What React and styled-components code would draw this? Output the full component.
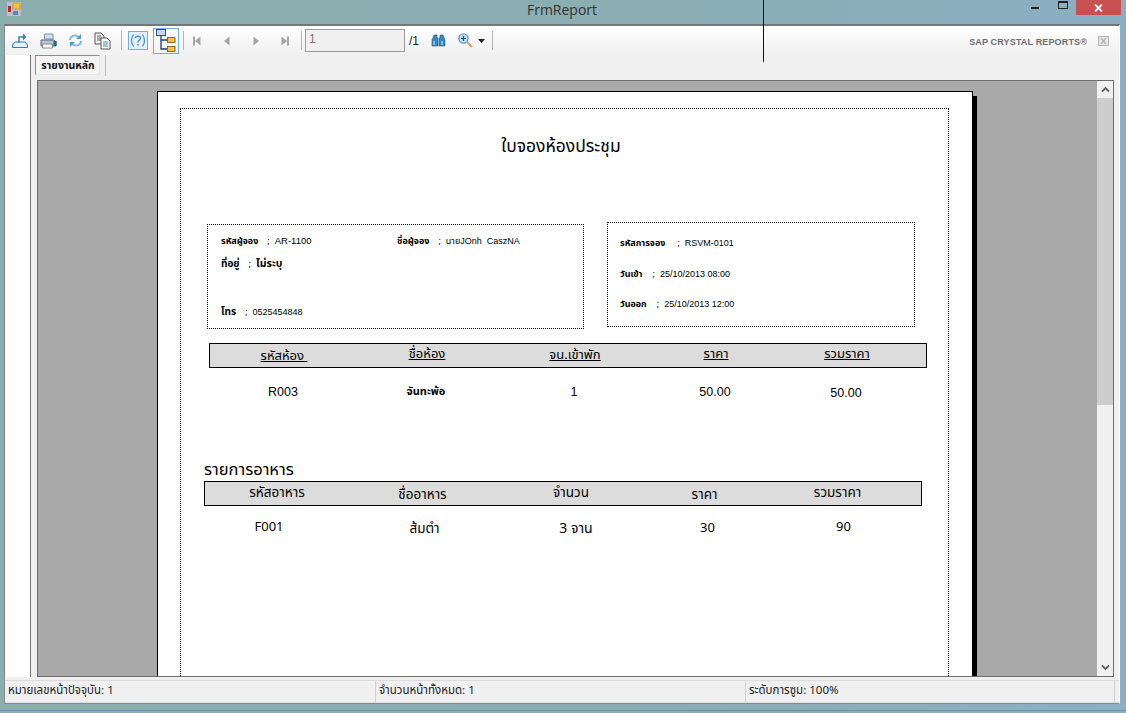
import React from 'react';
import styled, { createGlobalStyle } from 'styled-components';

const thaiSans = `"Tahoma", "Noto Sans Thai", "Noto Sans", "Liberation Sans", sans-serif`;

const GlobalStyle = createGlobalStyle`
  html, body {
    margin: 0;
    padding: 0;
    overflow: hidden;
    background: #8aaeb8;
  }
`;

const Desktop = styled.div`
  position: relative;
  width: 1126px;
  height: 713px;
  display: flex;
  flex-direction: column;
  overflow: hidden;
  background: linear-gradient(90deg, #8aaeae 0%, #8aaeb2 55%, #8aafc3 100%);
  font-family: "Liberation Sans", sans-serif;
`;

const TitleBar = styled.div`
  position: relative;
  height: 24px;
  flex: none;
  display: flex;
  align-items: flex-start;
  justify-content: space-between;
`;

const AppIcon = styled.svg`
  width: 14px;
  height: 14px;
  margin: 2px 0 0 7px;
`;

const TitleText = styled.div`
  position: absolute;
  left: 0;
  right: 2px;
  top: 1px;
  text-align: center;
  font-size: 14px;
  line-height: 18px;
  color: #333;
  font-family: "Open Sans", "Liberation Sans", sans-serif;
`;

const WindowControls = styled.div`
  display: flex;
  align-items: flex-start;
  margin-right: 5px;
`;

const MinButton = styled.div`
  width: 8px;
  height: 2px;
  margin: 7px 19px 0 0;
  background: #222;
`;

const MaxButton = styled.div`
  width: 8px;
  height: 5px;
  margin: 1px 8px 0 0;
  border: 1px solid #222;
  border-top-width: 2px;
`;

const CloseButton = styled.div`
  width: 45px;
  height: 15px;
  background: #c75050;
  display: flex;
  align-items: center;
  justify-content: center;
`;

const StrayLine = styled.div`
  position: absolute;
  left: 763px;
  top: 0;
  width: 1px;
  height: 62px;
  background: #111;
`;

const Frame = styled.div`
  margin: 0 6px 0 4px;
  height: 680px;
  flex: none;
  display: flex;
  flex-direction: column;
  background: #f0f0f0;
  border-top: 2px solid #777;
  border-left: 1px solid #888;
  border-right: 1px solid #fff;
  border-bottom: 1px solid #8a8a8a;
  box-sizing: border-box;
`;

const BottomEdge = styled.div`
  margin-top: 6px;
  height: 1px;
  background: #6d93ad;
`;

const Toolbar = styled.div`
  height: 29px;
  flex: none;
  display: flex;
  align-items: center;
  padding-left: 3px;
  background: linear-gradient(180deg, #ffffff 0%, #f0f0f0 100%);
`;

const ToolIcon = styled.button`
  width: ${(p) => p.$w || 28}px;
  height: ${(p) => p.$h || 18}px;
  margin-left: ${(p) => p.$ml || 0}px;
  padding: 0;
  flex: none;
  display: flex;
  align-items: center;
  justify-content: center;
  background: ${(p) => p.$fill || 'transparent'};
  border: ${(p) => (p.$active ? '1px solid #6aaef0' : 'none')};
  box-sizing: border-box;
`;

const ToolSep = styled.div`
  width: 1px;
  height: 19px;
  flex: none;
  background: #b4b4b4;
  margin: 0 ${(p) => p.$right ?? 4}px 0 ${(p) => p.$left ?? 4}px;
`;

const PageInput = styled.div`
  width: 100px;
  height: 23px;
  flex: none;
  box-sizing: border-box;
  border: 1px solid #9a9a9a;
  background: #f0f0f0;
  color: #777;
  font-size: 12px;
  line-height: 18px;
  padding-left: 3px;
`;

const PageTotal = styled.div`
  width: 22px;
  margin-left: 4px;
  flex: none;
  font-size: 12px;
  color: #222;
`;

const BrandText = styled.div`
  margin-left: auto;
  margin-top: 3px;
  font-size: 9px;
  font-weight: bold;
  letter-spacing: 0.15px;
  color: #6f6f6f;
  white-space: nowrap;
`;

const ToolClose = styled.svg`
  width: 11px;
  height: 10px;
  margin: 0 10px 0 11px;
`;

const Body = styled.div`
  flex: 1;
  min-height: 0;
  display: flex;
  padding-left: 1px;
`;

const SidePanel = styled.div`
  width: 24px;
  flex: none;
  background: #fff;
  border-right: 1px solid #777;
  height: 622px;
`;

const MainColumn = styled.div`
  width: 1077px;
  margin-left: 6px;
  display: flex;
  flex-direction: column;
`;

const TabRow = styled.div`
  height: 25px;
  flex: none;
  margin-left: -2px;
  display: flex;
  align-items: flex-start;
`;

const Tab = styled.div`
  width: 65px;
  height: 20px;
  box-sizing: border-box;
  border: 1px solid #8c8c8c;
  border-right-color: #e6e6e6;
  border-bottom-color: #e6e6e6;
  background: #f4f4f4;
  padding-left: 1px;
  font-family: ${thaiSans};
  font-size: 10.5px;
  font-weight: bold;
  line-height: 20px;
  text-align: center;
  color: #111;
`;

const TabSep = styled.div`
  width: 1px;
  height: 21px;
  margin-left: 5px;
  background: #bdbdbd;
`;

const Viewer = styled.div`
  height: 597px;
  flex: none;
  box-sizing: border-box;
  display: flex;
  border: 1px solid #6e6e6e;
  background: #a9a9a9;
  overflow: hidden;
`;

const Canvas = styled.div`
  flex: 1;
  min-width: 0;
  overflow: hidden;
  padding: 10px 0 0 119px;
`;

const Sheet = styled.div`
  width: 816px;
  height: 700px;
  box-sizing: border-box;
  padding: 16px 23px 0 22px;
  background: #fff;
  border: 1px solid #000;
  box-shadow: 4px 5px 0 #000;
`;

const DottedArea = styled.div`
  height: 660px;
  box-sizing: border-box;
  border: 1px dotted #000;
  padding-top: 25px;
  color: #000;
  font-family: ${thaiSans};
`;

const ReportTitle = styled.div`
  margin-right: 7px;
  padding-top: 1px;
  font-size: 17.5px;
  line-height: 24px;
  text-align: center;
`;

const InfoRow = styled.div`
  display: flex;
  align-items: flex-start;
  margin: 63px 0 0 26px;
`;

const InfoBox = styled.div`
  box-sizing: border-box;
  width: ${(p) => p.$w}px;
  height: 105px;
  margin: ${(p) => p.$top || 0}px ${(p) => p.$right || 0}px 0 0;
  border: 1px dotted #000;
  padding: ${(p) => p.$padTop || 0}px 0 0 ${(p) => p.$padLeft || 13}px;
  display: flex;
  flex-direction: column;
`;

const InfoLine = styled.div`
  display: flex;
  height: ${(p) => p.$h}px;
  font-size: 9px;
  line-height: 12px;
  white-space: nowrap;
`;

const InfoField = styled.div`
  width: ${(p) => (p.$w ? `${p.$w}px` : 'auto')};
  flex: none;
`;

const InfoLabel = styled.span`
  font-weight: bold;
  font-size: ${(p) => p.$size || 9}px;
`;

const Semi = styled.span`
  margin: 0 ${(p) => p.$right || 5}px 0 ${(p) => p.$left || 9}px;
`;

const InfoValue = styled.span`
  font-size: ${(p) => p.$size || 9}px;
  font-family: "Liberation Sans", ${thaiSans};
`;

const TableBar = styled.div`
  display: grid;
  grid-template-columns: ${(p) => p.$cols};
  width: 718px;
  height: 25px;
  box-sizing: border-box;
  margin-left: ${(p) => p.$left}px;
  margin-top: ${(p) => p.$top || 0}px;
  background: #dcdcdc;
  border: 1px solid #000;
`;

const HeaderCell = styled.div`
  text-align: center;
  font-size: ${(p) => p.$size || 13}px;
  line-height: 18px;
  padding-top: ${(p) => p.$drop || 0}px;
  white-space: nowrap;
  text-decoration: ${(p) => (p.$underline ? 'underline' : 'none')};
`;

const DataRow = styled.div`
  display: grid;
  grid-template-columns: ${(p) => p.$cols};
  width: 718px;
  margin-left: ${(p) => p.$left}px;
  padding-top: ${(p) => p.$top}px;
  height: ${(p) => p.$h}px;
`;

const DataCell = styled.div`
  text-align: center;
  font-size: ${(p) => p.$size || 13}px;
  font-weight: ${(p) => (p.$bold ? 'bold' : 'normal')};
  font-family: ${(p) => (p.$arial ? '"Liberation Sans", sans-serif' : 'inherit')};
  line-height: 18px;
  padding-top: ${(p) => p.$drop || 0}px;
  white-space: nowrap;
`;

const SectionTitle = styled.div`
  margin-left: 23px;
  font-size: 16.5px;
  line-height: 20px;
`;

const ScrollBar = styled.div`
  width: 16px;
  flex: none;
  background: #f0f0f0;
  display: flex;
  flex-direction: column;
`;

const ScrollButton = styled.div`
  height: 17px;
  flex: none;
  display: flex;
  align-items: center;
  justify-content: center;
`;

const ScrollThumb = styled.div`
  height: 307px;
  flex: none;
  background: #cdcdcd;
`;

const ScrollTrack = styled.div`
  flex: 1;
`;

const StatusBar = styled.div`
  height: 21px;
  flex: none;
  margin-top: 5px;
  display: grid;
  grid-template-columns: 371px 370px 369px;
  border-top: 1px solid #dcdcdc;
  border-bottom: 1px solid #dcdcdc;
  background: #f0f0f0;
  font-family: ${thaiSans};
  font-size: 11.5px;
  line-height: 20px;
  color: #222;
`;

const StatusCell = styled.div`
  padding-left: 3px;
  border-right: 1px solid #d0d0d0;
  white-space: nowrap;
`;

const ExportIcon = () => (
  <svg width="18" height="17" viewBox="0 0 18 17">
    <path d="M1.5 13 L4 10 H14 L16.5 13 V15.5 H1.5 Z" fill="#e4f0f8" stroke="#2f7fb5" />
    <path d="M8 11 V5 H12" fill="none" stroke="#2f7fb5" strokeWidth="1.4" />
    <path d="M12 1.5 L15.5 5 L12 8.5 Z" fill="#2f7fb5" />
  </svg>
);

const PrintIcon = () => (
  <svg width="17" height="16" viewBox="0 0 17 16">
    <path d="M4.5 1 H13 V6 H4.5 Z" fill="#cfe2f2" stroke="#7c93a8" />
    <path d="M1 7 H14 L16 9 V13 H1 Z" fill="#b9c4cf" stroke="#5c6c7c" />
    <path d="M2.5 11 H12.5 V15 H2.5 Z" fill="#fff" stroke="#7c8c9c" />
    <path d="M13.5 8 h3 v5 h-3 z" fill="#1e6a88" />
  </svg>
);

const RefreshIcon = () => (
  <svg width="15" height="15" viewBox="0 0 15 15" fill="none">
    <path d="M2 7 C2 3 7 1 11 4" stroke="#7dbbe0" strokeWidth="2" />
    <path d="M13 1 V6 H8 Z" fill="#4f9ccc" />
    <path d="M13 8 C13 12 8 14 4 11" stroke="#7dbbe0" strokeWidth="2" />
    <path d="M2 14 V9 H7 Z" fill="#4f9ccc" />
  </svg>
);

const CopyIcon = () => (
  <svg width="18" height="18" viewBox="0 0 18 18">
    <path d="M1 1 H7 L10 4 V12 H1 Z" fill="#f2f2f2" stroke="#555" />
    <path d="M3 4 H7 M3 6 H8 M3 8 H8" stroke="#666" />
    <path d="M7 6 H13 L16 9 V17 H7 Z" fill="#fff" stroke="#555" />
    <path d="M9 10 H14 M9 12 H14 M9 14 H14" stroke="#3d8cc4" />
  </svg>
);

const HelpIcon = () => (
  <svg width="16" height="15" viewBox="0 0 16 15" fill="none" stroke="#4a8fd0" strokeWidth="1.2">
    <path d="M3.5 1.5 C0.8 5 0.8 10 3.5 13.5" />
    <path d="M12.5 1.5 C15.2 5 15.2 10 12.5 13.5" />
    <path d="M5.5 5 C5.5 2.5 10.5 2.5 10.5 5 C10.5 7 8 7 8 9.5" strokeWidth="1.5" />
    <path d="M8 11 V12.6" strokeWidth="1.6" />
  </svg>
);

const TreeIcon = () => (
  <svg width="24" height="23" viewBox="0 0 24 23">
    <rect x="2.5" y="0.5" width="9" height="6" fill="#c9d6e8" stroke="#30507c" />
    <path d="M7 7 V20 H13 M7 11 H13" fill="none" stroke="#1d3c6c" strokeWidth="1.3" />
    <rect x="13.5" y="8.5" width="7.5" height="5" fill="#f5c04a" stroke="#8a6d22" />
    <rect x="13.5" y="17.5" width="7.5" height="5" fill="#f5c04a" stroke="#8a6d22" />
  </svg>
);

const NavIcon = ({ dir, bar }) => (
  <svg width="9" height="10" viewBox="0 0 9 10">
    {dir === 'left' ? <path d="M7.5 0.5 V9.5 L2 5 Z" fill="#a5a5a5" /> : <path d="M1.5 0.5 V9.5 L7 5 Z" fill="#a5a5a5" />}
    {bar && <rect x={dir === 'left' ? 0 : 7} y="0.5" width="2" height="9" fill="#a5a5a5" />}
  </svg>
);

const BinocularsIcon = () => (
  <svg width="15" height="13" viewBox="0 0 15 13">
    <path d="M3 1 H6 V4 H7 V12 H1 V6 Z" fill="#3b86bc" stroke="#1f5f90" strokeWidth="0.6" />
    <path d="M12 1 H9 V4 H8 V12 H14 V6 Z" fill="#3b86bc" stroke="#1f5f90" strokeWidth="0.6" />
    <path d="M3 7 V11 M11 7 V11" stroke="#cfe6f6" />
  </svg>
);

const ZoomIcon = () => (
  <svg width="15" height="16" viewBox="0 0 15 16">
    <circle cx="5.5" cy="5.5" r="4.6" fill="#bfe0f4" stroke="#4fa0d4" strokeWidth="1.3" />
    <path d="M3 5.5 H8 M5.5 3 V8" stroke="#1f4f7c" strokeWidth="1.2" />
    <path d="M9 9 L14 14" stroke="#e0a050" strokeWidth="2" />
  </svg>
);

const Caret = () => (
  <svg width="7" height="4" viewBox="0 0 7 4">
    <path d="M0 0 H7 L3.5 4 Z" fill="#222" />
  </svg>
);

const Chevron = ({ up }) => (
  <svg width="9" height="7" viewBox="0 0 9 7" fill="none">
    <path d={up ? 'M1 5.5 L4.5 2 L8 5.5' : 'M1 1.5 L4.5 5 L8 1.5'} stroke="#606060" strokeWidth="1.8" />
  </svg>
);

const roomCols = '148px 138px 158px 124px 138px';
const foodHeadCols = '144px 147px 150px 117px 149px';
const foodDataCols = '130px 181px 122px 141px 131px';

export default function App() {
  return (
    <>
      <GlobalStyle />
      <Desktop>
        <TitleBar>
          <AppIcon viewBox="0 0 14 14">
            <rect x="0" y="0" width="14" height="14" fill="#c0c0c0" />
            <rect x="6" y="1" width="7" height="6" fill="#f5c430" stroke="#b08a20" strokeWidth="0.6" />
            <rect x="1" y="4" width="3" height="6" fill="#c0282c" />
            <rect x="6" y="9" width="5" height="4" fill="#4f86d0" />
          </AppIcon>
          <TitleText>FrmReport</TitleText>
          <WindowControls>
            <MinButton />
            <MaxButton />
            <CloseButton>
              <svg width="9" height="8" viewBox="0 0 9 8">
                <path d="M1 0.5 L8 7.5 M8 0.5 L1 7.5" stroke="#fff" strokeWidth="1.8" />
              </svg>
            </CloseButton>
          </WindowControls>
        </TitleBar>

        <Frame>
          <Toolbar>
            <ToolIcon $w={24}><ExportIcon /></ToolIcon>
            <ToolIcon $w={32}><PrintIcon /></ToolIcon>
            <ToolIcon $w={22}><RefreshIcon /></ToolIcon>
            <ToolIcon $w={34}><CopyIcon /></ToolIcon>
            <ToolSep $left={1} $right={6} />
            <ToolIcon $w={20} $h={19} $active $fill="#e3f1fc"><HelpIcon /></ToolIcon>
            <ToolIcon $w={26} $h={26} $active $ml={5}><TreeIcon /></ToolIcon>
            <ToolSep $left={4} $right={0} />
            <ToolIcon $w={26}><NavIcon dir="left" bar /></ToolIcon>
            <ToolIcon $w={32}><NavIcon dir="left" /></ToolIcon>
            <ToolIcon $w={28}><NavIcon dir="right" /></ToolIcon>
            <ToolIcon $w={28}><NavIcon dir="right" bar /></ToolIcon>
            <ToolSep $left={3} $right={3} />
            <PageInput>1</PageInput>
            <PageTotal>/1</PageTotal>
            <ToolIcon $w={15}><BinocularsIcon /></ToolIcon>
            <ToolIcon $w={15} $ml={12}><ZoomIcon /></ToolIcon>
            <ToolIcon $w={7} $ml={5}><Caret /></ToolIcon>
            <ToolSep $left={7} />
            <BrandText>SAP CRYSTAL REPORTS®</BrandText>
            <ToolClose viewBox="0 0 11 10">
              <rect x="0.5" y="0.5" width="10" height="9" fill="#e8e8e8" stroke="#b5b5b5" />
              <path d="M3 2 L8 8 M8 2 L3 8" stroke="#b0b0b0" strokeWidth="1.2" />
            </ToolClose>
          </Toolbar>

          <Body>
            <SidePanel />
            <MainColumn>
              <TabRow>
                <Tab>รายงานหลัก</Tab>
                <TabSep />
              </TabRow>
              <Viewer>
                <Canvas>
                  <Sheet>
                    <DottedArea>
                      <ReportTitle>ใบจองห้องประชุม</ReportTitle>
                      <InfoRow>
                        <InfoBox $w={377} $top={2} $right={23} $padTop={10}>
                          <InfoLine $h={23}>
                            <InfoField $w={176}>
                              <InfoLabel>รหัสผู้จอง</InfoLabel><Semi>;</Semi><InfoValue $size={9.5}>AR-1100</InfoValue>
                            </InfoField>
                            <InfoField>
                              <InfoLabel>ชื่อผู้จอง</InfoLabel><Semi>;</Semi><InfoValue>นายJOnh&nbsp; CaszNA</InfoValue>
                            </InfoField>
                          </InfoLine>
                          <InfoLine $h={48}>
                            <InfoField>
                              <InfoLabel $size={10}>ที่อยู่</InfoLabel><Semi>;</Semi><InfoLabel $size={10.5}>ไม่ระบุ</InfoLabel>
                            </InfoField>
                          </InfoLine>
                          <InfoLine $h={12}>
                            <InfoField>
                              <InfoLabel $size={10}>โทร</InfoLabel><Semi>;</Semi><InfoValue>0525454848</InfoValue>
                            </InfoField>
                          </InfoLine>
                        </InfoBox>
                        <InfoBox $w={308} $padTop={14} $padLeft={12}>
                          <InfoLine $h={31}>
                            <InfoField>
                              <InfoLabel>รหัสการจอง</InfoLabel><Semi $left={12}>;</Semi><InfoValue>RSVM-0101</InfoValue>
                            </InfoField>
                          </InfoLine>
                          <InfoLine $h={30}>
                            <InfoField>
                              <InfoLabel>วันเข้า</InfoLabel><Semi $left={10}>;</Semi><InfoValue>25/10/2013 08:00</InfoValue>
                            </InfoField>
                          </InfoLine>
                          <InfoLine $h={12}>
                            <InfoField>
                              <InfoLabel>วันออก</InfoLabel><Semi $left={10}>;</Semi><InfoValue>25/10/2013 12:00</InfoValue>
                            </InfoField>
                          </InfoLine>
                        </InfoBox>
                      </InfoRow>

                      <TableBar $cols={roomCols} $left={28} $top={14}>
                        <HeaderCell $underline $drop={3}>รหัสห้อง&nbsp;</HeaderCell>
                        <HeaderCell $underline $drop={1}>ชื่อห้อง</HeaderCell>
                        <HeaderCell $underline $drop={2}>จน.เข้าพัก</HeaderCell>
                        <HeaderCell $underline $drop={1}>ราคา</HeaderCell>
                        <HeaderCell $underline $drop={1}>รวมราคา</HeaderCell>
                      </TableBar>
                      <DataRow $cols={roomCols} $left={28} $top={15} $h={77}>
                        <DataCell $arial $size={12.5}>R003</DataCell>
                        <DataCell $size={11} $bold>จันทะพ้อ</DataCell>
                        <DataCell $arial $size={12.5}>1</DataCell>
                        <DataCell $arial $size={12.5}>50.00</DataCell>
                        <DataCell $arial $size={12.5} $drop={1}>50.00</DataCell>
                      </DataRow>

                      <SectionTitle>รายการอาหาร</SectionTitle>
                      <TableBar $cols={foodHeadCols} $left={23} $top={1}>
                        <HeaderCell $size={13.5} $drop={2}>รหัสอาหาร</HeaderCell>
                        <HeaderCell $size={13.5} $drop={4}>ชื่ออาหาร</HeaderCell>
                        <HeaderCell $size={13.5} $drop={2}>จำนวน</HeaderCell>
                        <HeaderCell $size={13.5} $drop={4}>ราคา</HeaderCell>
                        <HeaderCell $size={13.5} $drop={2}>รวมราคา</HeaderCell>
                      </TableBar>
                      <DataRow $cols={foodDataCols} $left={23} $top={12} $h={60}>
                        <DataCell>F001</DataCell>
                        <DataCell $size={13.5} $drop={2}>ส้มตำ</DataCell>
                        <DataCell $size={14} $drop={2}>3 จาน</DataCell>
                        <DataCell $drop={1}>30</DataCell>
                        <DataCell>90</DataCell>
                      </DataRow>
                    </DottedArea>
                  </Sheet>
                </Canvas>
                <ScrollBar>
                  <ScrollButton><Chevron up /></ScrollButton>
                  <ScrollThumb />
                  <ScrollTrack />
                  <ScrollButton><Chevron /></ScrollButton>
                </ScrollBar>
              </Viewer>
            </MainColumn>
          </Body>

          <StatusBar>
            <StatusCell>หมายเลขหน้าปัจจุบัน: 1</StatusCell>
            <StatusCell>จำนวนหน้าทั้งหมด: 1</StatusCell>
            <StatusCell>ระดับการซูม: 100%</StatusCell>
          </StatusBar>
        </Frame>
        <BottomEdge />
        <StrayLine />
      </Desktop>
    </>
  );
}
